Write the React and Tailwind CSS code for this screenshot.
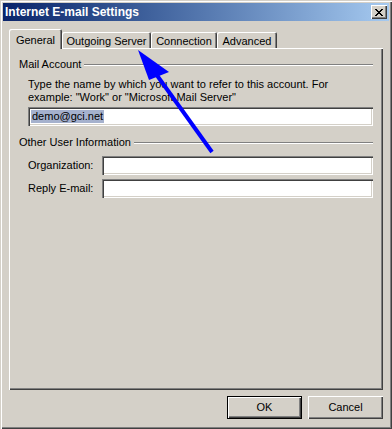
import React from 'react';

const font = { fontFamily: '"Liberation Sans", Arial, sans-serif' };

const Tab = ({ label, width, selected }) =>
    selected ? (
        <div
            className={`relative z-10 h-[20px] -mb-px flex items-start justify-center pt-[3px] bg-[#d4d0c8] rounded-tl-[2px] rounded-tr-[2px] shadow-[inset_1px_1px_#ffffff,inset_-1px_0_#404040,inset_-2px_0_#808080] ${width}`}
        >
            {label}
        </div>
    ) : (
        <div
            className={`h-[16px] flex items-center justify-center pt-[2px] rounded-tl-[2px] rounded-tr-[2px] shadow-[inset_1px_1px_#ffffff,inset_-1px_0_#404040,inset_-2px_0_#808080] ${width}`}
        >
            {label}
        </div>
    );

const GroupHeader = ({ title }) => (
    <div className="h-[14px] leading-[14px] flex items-center">
        <span>{title}</span>
        <div className="flex-1 ml-[3px] mt-[1px] border-t border-t-[#808080] border-b border-b-white" />
    </div>
);

const Field = ({ className = '', children }) => (
    <div
        className={`h-[19px] bg-white flex items-center pl-[3px] shadow-[inset_1px_1px_#808080,inset_2px_2px_#404040,inset_-1px_-1px_#ffffff,inset_-2px_-2px_#d4d0c8] ${className}`}
    >
        {children}
    </div>
);

const Button = ({ label, isDefault }) => (
    <div
        className={`w-[75px] h-[23px] flex items-center justify-center ${
            isDefault
                ? 'border border-black shadow-[inset_1px_1px_#ffffff,inset_-1px_-1px_#404040,inset_-2px_-2px_#808080]'
                : 'shadow-[inset_1px_1px_#ffffff,inset_-1px_-1px_#404040,inset_-2px_-2px_#808080]'
        }`}
    >
        {label}
    </div>
);

export default function App() {
    return (
        <div
            className="relative w-[392px] h-[429px] bg-[#d4d0c8] p-[3px] text-[11px] text-black shadow-[inset_1px_1px_#d4d0c8,inset_2px_2px_#ffffff,inset_-1px_-1px_#404040,inset_-2px_-2px_#808080] overflow-hidden"
            style={font}
        >
            {/* title bar */}
            <div className="h-[18px] flex items-center justify-between pl-[2px] pr-[2px] bg-gradient-to-r from-[#0a246a] to-[#a6caf0]">
                <span className="text-white font-bold text-[12px] leading-none">Internet E-mail Settings</span>
                <div className="w-[16px] h-[14px] bg-[#d4d0c8] flex items-center justify-center shadow-[inset_1px_1px_#ffffff,inset_-1px_-1px_#404040,inset_-2px_-2px_#808080]">
                    <svg width="8" height="7" viewBox="0 0 8 7" shapeRendering="crispEdges">
                        <path d="M0 0h2v1h-2zM6 0h2v1h-2zM1 1h2v1h-2zM5 1h2v1h-2zM2 2h4v1h-4zM3 3h2v1h-2zM2 4h4v1h-4zM1 5h2v1h-2zM5 5h2v1h-2zM0 6h2v1h-2zM6 6h2v1h-2z" fill="#000" />
                    </svg>
                </div>
            </div>

            <div className="px-[6px] pt-[8px]">
                {/* tabs */}
                <div className="h-[19px] flex items-end">
                    <Tab label="General" width="w-[53px]" selected />
                    <Tab label="Outgoing Server" width="w-[89px]" />
                    <Tab label="Connection" width="w-[66px]" />
                    <Tab label="Advanced" width="w-[60px]" />
                </div>

                {/* panel */}
                <div className="h-[342px] pt-[9px] pl-[10px] pr-[10px] shadow-[inset_1px_1px_#ffffff,inset_-1px_-1px_#404040,inset_-2px_-2px_#808080]">
                    <GroupHeader title="Mail Account" />
                    <div className="ml-[9px] mt-[7px] leading-[13px]">
                        Type the name by which you want to refer to this account. For
                        <br />
                        example: "Work" or "Microsoft Mail Server"
                    </div>
                    <Field className="ml-[9px] mt-[3px]">
                        <span className="bg-[#a5b1cd] leading-[13px] px-px">demo@gci.net</span>
                    </Field>

                    <div className="mt-[9px]">
                        <GroupHeader title="Other User Information" />
                    </div>
                    <div className="ml-[9px] mt-[7px] flex items-center">
                        <span className="w-[74px]">Organization:</span>
                        <Field className="flex-1" />
                    </div>
                    <div className="ml-[9px] mt-[4px] flex items-center">
                        <span className="w-[74px]">Reply E-mail:</span>
                        <Field className="flex-1" />
                    </div>
                </div>

                {/* buttons */}
                <div className="mt-[6px] flex justify-end gap-[6px]">
                    <Button label="OK" isDefault />
                    <Button label="Cancel" />
                </div>
            </div>

            {/* annotation arrow */}
            <svg className="absolute left-0 top-0 pointer-events-none" width="392" height="429">
                <line x1="212" y1="152" x2="156" y2="74" stroke="#0000ff" strokeWidth="4" />
                <polygon points="138,50 149,80 169,72" fill="#0000ff" />
            </svg>
        </div>
    );
}
